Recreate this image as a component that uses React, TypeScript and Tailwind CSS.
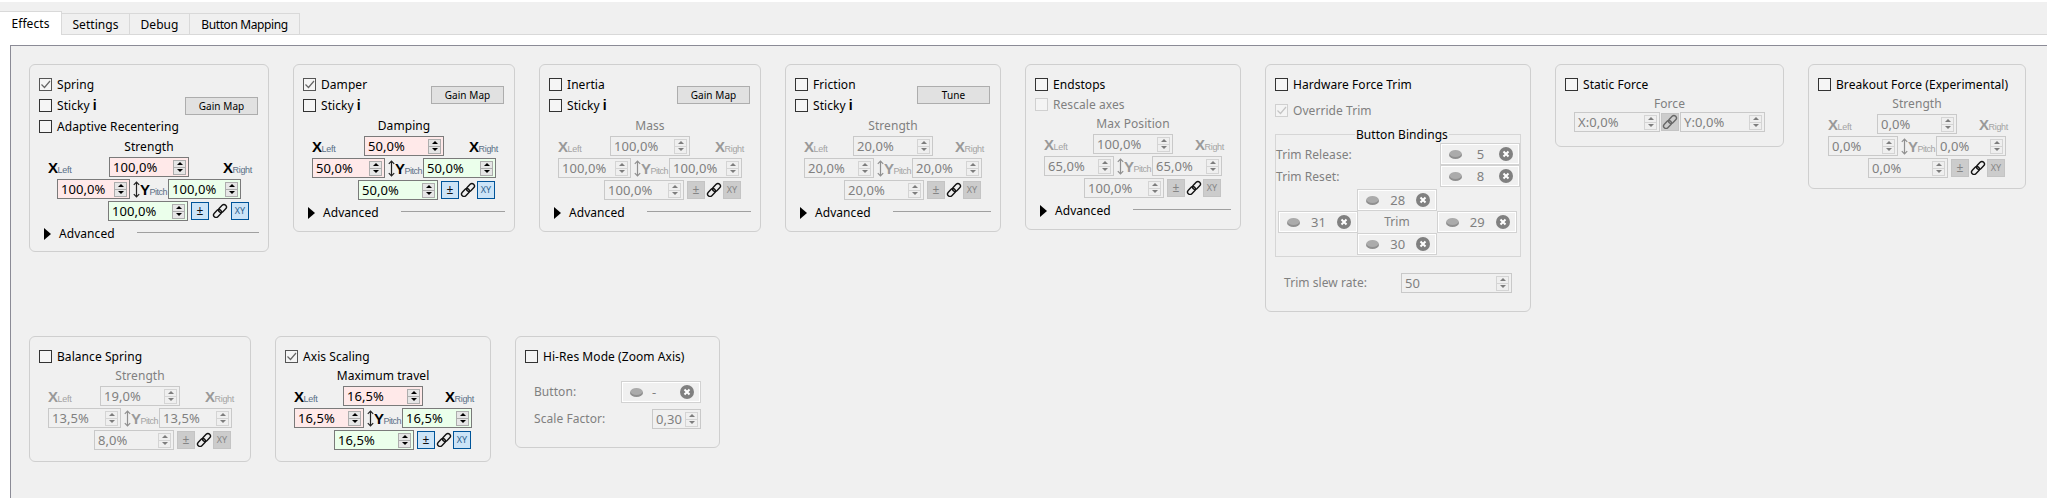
import React from "react";
import clsx from "clsx";

const FONT = "[font-family:'Noto_Sans',sans-serif]";
const ROW = "h-[20px]! pt-px";

type Tone = "pink" | "green" | "plain";

function Tri({ up, off }: { up?: boolean; off?: boolean }) {
  return (
    <svg width="6" height="3" viewBox="0 0 6 3" className="block">
      <polygon
        points={up ? "3,0 6,3 0,3" : "0,0 6,0 3,3"}
        fill={off ? "#7d7d7d" : "#000"}
      />
    </svg>
  );
}

function Spin({
  value,
  tone = "plain",
  off,
  className,
}: {
  value: string;
  tone?: Tone;
  off?: boolean;
  className?: string;
}) {
  const half = clsx(
    "flex h-[8px] w-[13px] items-center justify-center border",
    off ? "border-[#d4d4d4] bg-[#efefef]" : "border-[#adadad] bg-[#e6e6e6]",
  );
  return (
    <div
      className={clsx(
        "flex h-[20px] shrink-0 items-center justify-between border pl-[3px] pr-[2px] text-[13px]",
        off ? "border-[#c9c9c9] text-[#808080]" : "border-[#7a7a7a] text-black",
        tone === "pink" && "bg-[#ffe9e9]",
        tone === "green" && "bg-[#ebffeb]",
        className,
      )}
    >
      <span>{value}</span>
      <div className="flex flex-col">
        <div className={half}>
          <Tri up off={off} />
        </div>
        <div className={clsx(half, "-mt-px")}>
          <Tri off={off} />
        </div>
      </div>
    </div>
  );
}

function Check({
  label,
  checked,
  off,
  info,
  className,
}: {
  label: string;
  checked?: boolean;
  off?: boolean;
  info?: boolean;
  className?: string;
}) {
  return (
    <div className={clsx("flex h-[21px] items-center", className)}>
      <div
        className={clsx(
          "flex h-[13px] w-[13px] shrink-0 items-center justify-center border",
          off ? "border-[#d0d0d0] bg-[#f4f4f4]" : "bg-[#f5f5f5]",
          !off && (checked ? "border-[#555]" : "border-[#333]"),
        )}
      >
        {checked && (
          <svg width="11" height="11" viewBox="0 0 11 11">
            <path
              d="M1.5 5.5 4.5 8.5 10 2"
              fill="none"
              stroke={off ? "#c4c4c4" : "#666"}
              strokeWidth="1.2"
            />
          </svg>
        )}
      </div>
      <span
        className={clsx(
          "ml-[5px] whitespace-nowrap",
          off ? "text-[#808080]" : "text-black",
        )}
      >
        {label}
        {info && (
          <b className="ml-[3px] font-['Liberation_Sans'] text-[14px] font-bold">
            i
          </b>
        )}
      </span>
    </div>
  );
}

function AxisX({ side, off }: { side: string; off?: boolean }) {
  return (
    <div className="flex h-[20px] items-end whitespace-nowrap font-['Liberation_Sans']">
      <span
        className={clsx(
          "text-[15px] leading-[18px] font-bold tracking-[-0.5px]",
          off ? "text-[#999]" : "text-black",
        )}
      >
        X
      </span>
      <span
        className={clsx(
          "text-[9px] leading-[14px] tracking-[-0.3px]",
          off ? "text-[#a3a3a3]" : "text-[#5a6f86]",
        )}
      >
        {side}
      </span>
    </div>
  );
}

function LinkIcon({ color = "#111", size = 16 }: { color?: string; size?: number }) {
  return (
    <svg width={size} height={size} viewBox="0 0 16 16" fill="none" stroke={color} strokeWidth="1.4">
      <rect x="1" y="8" width="9" height="5" rx="2.5" transform="rotate(-45 5.500 10.500)" />
      <rect x="6" y="3" width="9" height="5" rx="2.5" transform="rotate(-45 10.500 5.500)" />
    </svg>
  );
}

function MiniBtn({ children, off, tiny }: { children: React.ReactNode; off?: boolean; tiny?: boolean }) {
  return (
    <div
      className={clsx(
        "flex h-[18px] w-[18px] shrink-0 items-center justify-center border",
        tiny ? "text-[9px]" : "text-[12px]",
        off
          ? "border-[#c4c4c4] bg-[#cccccc] text-[#858585]"
          : "border-[#005499] bg-[#cce4f7]",
        !off && (tiny ? "text-[#2b5f8e]" : "text-[#111]"),
      )}
    >
      {children}
    </div>
  );
}

const layouts = {
  spring: {
    head: "w-[61px]",
    right: "ml-[34px]",
    mid: "ml-[9px]",
    side: "w-[73px]",
    gap: "w-[38px]",
    low: "ml-[60px]",
    link: "w-[22px]",
  },
  wide: {
    head: "w-[52px]",
    right: "ml-[25px]",
    mid: "",
    side: "w-[73px]",
    gap: "w-[38px]",
    low: "ml-[46px]",
    link: "w-[18px]",
  },
  narrow: {
    head: "w-[49px]",
    right: "ml-[22px]",
    mid: "",
    side: "w-[70px]",
    gap: "w-[38px]",
    low: "ml-[40px]",
    link: "w-[18px]",
  },
};

function XYControl({
  title,
  vals,
  off,
  layout,
  className = "ml-[9px]",
}: {
  title: string;
  vals: [string, string, string, string];
  off?: boolean;
  layout: keyof typeof layouts;
  className?: string;
}) {
  const l = layouts[layout];
  return (
    <div className={clsx("flex flex-col gap-[2px]", className)}>
      <div className="-mb-[2px] flex h-[20px]">
        <div className={clsx("shrink-0", l.head)} />
        <div
          className={clsx(
            "flex w-[80px] items-center justify-center whitespace-nowrap",
            off ? "text-[#808080]" : "text-black",
          )}
        >
          {title}
        </div>
      </div>
      <div className="flex">
        <div className={clsx("shrink-0", l.head)}>
          <AxisX side="Left" off={off} />
        </div>
        <Spin value={vals[0]} tone={off ? "plain" : "pink"} off={off} className="w-[80px]" />
        <div className={l.right}>
          <AxisX side="Right" off={off} />
        </div>
      </div>
      <div className={clsx("flex", l.mid)}>
        <Spin value={vals[1]} tone={off ? "plain" : "pink"} off={off} className={l.side} />
        <div className={clsx("flex shrink-0 items-end whitespace-nowrap pl-[3px] font-['Liberation_Sans']", l.gap)}>
          <svg width="7" height="17" viewBox="0 0 7 17" className="mb-[1px] shrink-0" fill="none" stroke={off ? "#8f8f8f" : "#222"} strokeWidth="1.2">
            <path d="M3.5 1v15M.8 3.800 3.500 1 6.200 3.800M.8 13.200 3.500 16 6.200 13.200" />
          </svg>
          <span className={clsx("text-[15px] leading-[18px] font-bold tracking-[-0.5px]", off ? "text-[#999]" : "text-black")}>
            Y
          </span>
          <span className={clsx("text-[9px] leading-[14px] tracking-[-0.5px]", off ? "text-[#a3a3a3]" : "text-[#5a6f86]")}>
            Pitch
          </span>
        </div>
        <Spin value={vals[2]} tone={off ? "plain" : "green"} off={off} className={l.side} />
      </div>
      <div className={clsx("flex items-center", l.low)}>
        <Spin value={vals[3]} tone={off ? "plain" : "green"} off={off} className="w-[80px]" />
        <div className="ml-[3px]">
          <MiniBtn off={off}>±</MiniBtn>
        </div>
        <div className={clsx("flex shrink-0 justify-center", l.link)}>
          <LinkIcon />
        </div>
        <MiniBtn off={off} tiny>
          XY
        </MiniBtn>
      </div>
    </div>
  );
}

function Advanced() {
  return (
    <div className="mt-[3px] flex h-[20px] items-center">
      <svg width="7" height="12" viewBox="0 0 7 12" className="ml-[5px] shrink-0">
        <polygon points="0,0 7,6 0,12" fill="#000" />
      </svg>
      <span className="ml-[8px] w-[78px] shrink-0 text-black">Advanced</span>
      <div className="mb-[4px] h-px flex-1 bg-[#a0a0a0]" />
    </div>
  );
}

function PushBtn({ label, className }: { label: string; className?: string }) {
  return (
    <div
      className={clsx(
        "mr-px flex h-[18px] w-[73px] shrink-0 items-center justify-center border border-[#adadad] bg-[#e1e1e1] text-[10px] text-black",
        className,
      )}
    >
      {label}
    </div>
  );
}

function Card({ className, children }: { className: string; children: React.ReactNode }) {
  return (
    <div className={clsx("shrink-0 rounded-[6px] border border-[#cfcfcf] pl-[9px] pr-[9px] pt-[9px]", className)}>
      {children}
    </div>
  );
}

function Binding({ value, className, dash }: { value: string; className?: string; dash?: boolean }) {
  return (
    <div
      className={clsx(
        "flex h-[22px] w-[80px] items-center border border-[#d2d2d2] pl-[8px] pr-[6px] text-[13px] text-[#808080] shadow-[inset_0_0_0_1px_#ffffff]",
        className,
      )}
    >
      <svg width="13" height="9" viewBox="0 0 13 9" className="shrink-0">
        <ellipse cx="6.500" cy="5" rx="6.500" ry="4" fill="#8f8f8f" />
        <ellipse cx="6.500" cy="3.500" rx="6" ry="3.500" fill="#ababab" />
      </svg>
      <span className={clsx("flex-1", dash ? "pl-[9px] text-left" : "text-center")}>{value}</span>
      <svg width="14" height="14" viewBox="0 0 14 14" className="shrink-0">
        <circle cx="7" cy="7" r="7" fill="#808080" />
        <path d="M4.500 4.500l5 5M9.500 4.500l-5 5" stroke="#fff" strokeWidth="2" />
      </svg>
    </div>
  );
}

function HardwareTrim() {
  return (
    <Card className="h-[248px] w-[266px]">
      <Check label="Hardware Force Trim" className={ROW} />
      <Check label="Override Trim" checked off className={clsx("mt-[6px]", ROW)} />
      <div className="relative mt-[14px] h-[123px] w-[246px] border border-[#d6d6d6] pt-[8px] text-[#808080]">
        <span className="absolute -top-[8px] left-[79px] bg-[#f0f0f0] px-px text-black">Button Bindings</span>
        <div className="flex items-center justify-between">
          <span className="pt-px">Trim Release:</span>
          <Binding value="5" />
        </div>
        <div className="flex items-center justify-between">
          <span className="pt-px">Trim Reset:</span>
          <Binding value="8" />
        </div>
        <div className="mt-[2px] grid w-[240px] grid-cols-3 pl-[2px] [grid-template-columns:80px_80px_80px]">
          <div />
          <Binding value="28" />
          <div />
          <Binding value="31" />
          <div className="flex items-center justify-center">Trim</div>
          <Binding value="29" />
          <div />
          <Binding value="30" />
          <div />
        </div>
      </div>
      <div className="ml-[9px] mt-[16px] flex w-[228px] items-center justify-between text-[#808080]">
        <span>Trim slew rate:</span>
        <Spin value="50" off className="w-[111px]" />
      </div>
    </Card>
  );
}

function StaticForce() {
  return (
    <Card className="h-[83px] w-[229px]">
      <Check label="Static Force" className={ROW} />
      <div className="ml-[9px] h-[18px] w-[191px] pt-px text-center leading-[18px] text-[#808080]">Force</div>
      <div className="ml-[9px] flex items-center">
        <Spin value="X:0,0%" off className="w-[86px]" />
        <div className="mx-px flex h-[18px] w-[18px] shrink-0 items-center justify-center border border-[#c4c4c4] bg-[#cccccc]">
          <LinkIcon color="#666" />
        </div>
        <Spin value="Y:0,0%" off className="w-[85px]" />
      </div>
    </Card>
  );
}

function HiRes() {
  return (
    <Card className="h-[112px] w-[205px]">
      <Check label="Hi-Res Mode (Zoom Axis)" className={ROW} />
      <div className="ml-[9px] mt-[15px] flex w-[167px] items-center justify-between text-[#808080]">
        <span>Button:</span>
        <Binding value="-" dash />
      </div>
      <div className="ml-[9px] mt-[6px] flex w-[167px] items-center justify-between text-[#808080]">
        <span>Scale Factor:</span>
        <Spin value="0,30" off className="w-[49px]" />
      </div>
    </Card>
  );
}

export default function App() {
  return (
    <div className={clsx("flex h-[498px] w-[2047px] flex-col overflow-hidden bg-white text-[12px] leading-[16px] tracking-[0.06px]", FONT)}>
      <div className="mt-[2px] flex h-[33px] items-end border-b border-[#d9d9d9] bg-[#f0f0f0]">
        <div className="-mb-px flex h-[24px] w-[62px] items-center justify-center border-r border-t border-[#d9d9d9] bg-white">
          Effects
        </div>
        <div className="flex h-[21px] w-[68px] items-center justify-center border-r border-t border-[#d9d9d9] pt-px">
          Settings
        </div>
        <div className="flex h-[21px] w-[60px] items-center justify-center border-r border-t border-[#d9d9d9] pt-px">
          Debug
        </div>
        <div className="flex h-[21px] w-[110px] items-center justify-center border-r border-t border-[#d9d9d9] pt-px tracking-[-0.4px]">
          Button Mapping
        </div>
      </div>
      <div className="ml-[10px] mt-[10px] flex flex-1 flex-col gap-[24px] border-l border-t border-[#8b8b96] bg-[#f0f0f0] pl-[18px] pt-[18px]">
        <div className="flex items-start gap-[24px]">
          <Card className="h-[188px] w-[240px]">
            <Check label="Spring" checked />
            <div className="flex items-center justify-between">
              <Check label="Sticky" info />
              <PushBtn label="Gain Map" />
            </div>
            <Check label="Adaptive Recentering" />
            <XYControl title="Strength" layout="spring" vals={["100,0%", "100,0%", "100,0%", "100,0%"]} />
            <Advanced />
          </Card>
          <Card className="h-[168px] w-[222px]">
            <div className="flex items-center justify-between">
              <div>
                <Check label="Damper" checked />
                <Check label="Sticky" info />
              </div>
              <PushBtn label="Gain Map" />
            </div>
            <XYControl title="Damping" layout="wide" vals={["50,0%", "50,0%", "50,0%", "50,0%"]} />
            <Advanced />
          </Card>
          <Card className="h-[168px] w-[222px]">
            <div className="flex items-center justify-between">
              <div>
                <Check label="Inertia" />
                <Check label="Sticky" info />
              </div>
              <PushBtn label="Gain Map" />
            </div>
            <XYControl title="Mass" layout="wide" off vals={["100,0%", "100,0%", "100,0%", "100,0%"]} />
            <Advanced />
          </Card>
          <Card className="h-[168px] w-[216px]">
            <div className="flex items-center justify-between">
              <div>
                <Check label="Friction" />
                <Check label="Sticky" info />
              </div>
              <PushBtn label="Tune" />
            </div>
            <XYControl title="Strength" layout="narrow" off vals={["20,0%", "20,0%", "20,0%", "20,0%"]} />
            <Advanced />
          </Card>
          <Card className="h-[166px] w-[216px]">
            <Check label="Endstops" className={ROW} />
            <Check label="Rescale axes" off className={ROW} />
            <XYControl title="Max Position" layout="narrow" off vals={["100,0%", "65,0%", "65,0%", "100,0%"]} />
            <Advanced />
          </Card>
          <HardwareTrim />
          <StaticForce />
          <Card className="h-[125px] w-[218px]">
            <Check label="Breakout Force (Experimental)" className={ROW} />
            <XYControl title="Strength" layout="narrow" off className="ml-[10px]" vals={["0,0%", "0,0%", "0,0%", "0,0%"]} />
          </Card>
        </div>
        <div className="flex items-start gap-[24px]">
          <Card className="h-[126px] w-[222px]">
            <Check label="Balance Spring" className={ROW} />
            <XYControl title="Strength" layout="wide" off vals={["19,0%", "13,5%", "13,5%", "8,0%"]} />
          </Card>
          <Card className="h-[126px] w-[216px]">
            <Check label="Axis Scaling" checked className={ROW} />
            <XYControl title="Maximum travel" layout="narrow" vals={["16,5%", "16,5%", "16,5%", "16,5%"]} />
          </Card>
          <HiRes />
        </div>
      </div>
    </div>
  );
}
